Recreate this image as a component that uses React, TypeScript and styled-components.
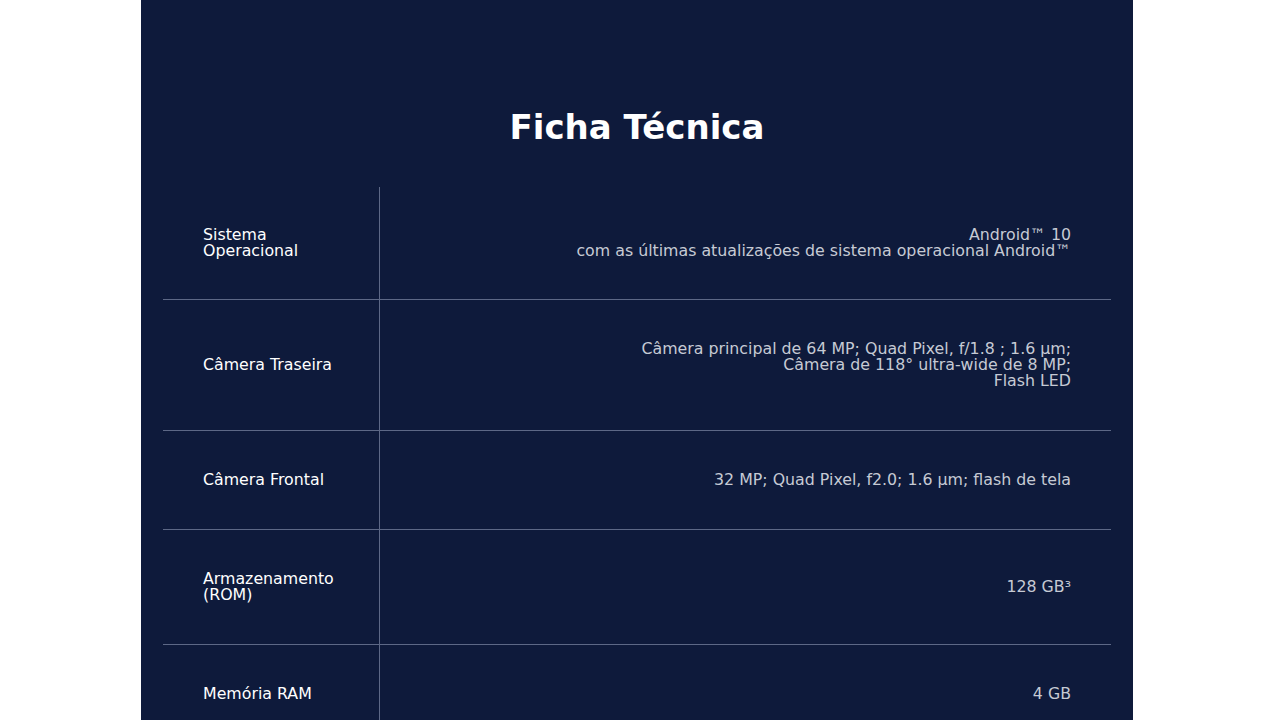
import React from 'react'
import styled, { createGlobalStyle } from 'styled-components'

const GlobalStyle = createGlobalStyle`
  html, body {
    margin: 0;
    padding: 0;
    background: #ffffff;
  }
  body {
    font-family: 'DejaVu Sans', 'Open Sans', sans-serif;
  }
`

const specs = [
  { label: ['Sistema', 'Operacional'], value: ['Android™ 10', 'com as últimas atualizações de sistema operacional Android™'] },
  {
    label: ['Câmera Traseira'],
    value: ['Câmera principal de 64 MP; Quad Pixel, f/1.8 ; 1.6 µm;', 'Câmera de 118° ultra-wide de 8 MP;', 'Flash LED'],
  },
  { label: ['Câmera Frontal'], value: ['32 MP; Quad Pixel, f2.0; 1.6 µm; flash de tela'] },
  { label: ['Armazenamento', '(ROM)'], value: ['128 GB³'] },
  { label: ['Memória RAM'], value: ['4 GB'] },
]

const App = () => (
  <>
    <GlobalStyle />
    <Page>
      <Panel>
        <Title>Ficha Técnica</Title>
        <Table>
          {specs.map((spec, i) => (
            <Row key={i} first={i === 0}>
              <Label first={i === 0}>
                {spec.label.map((line, j) => (
                  <Line key={j}>{line}</Line>
                ))}
              </Label>
              <Value first={i === 0}>
                {spec.value.map((line, j) => (
                  <Line key={j}>{line}</Line>
                ))}
              </Value>
            </Row>
          ))}
        </Table>
      </Panel>
    </Page>
  </>
)

const Page = styled.div`
  width: 1280px;
  height: 720px;
  overflow: hidden;
  display: flex;
  justify-content: center;
  padding-right: 6px;
  box-sizing: border-box;
`

const Panel = styled.section`
  width: 992px;
  background: #0e1a3b;
  padding: 0 22px;
  box-sizing: border-box;
`

const Title = styled.h1`
  margin: 0;
  padding: 104px 0 37px;
  text-align: center;
  color: #ffffff;
  font-size: 34px;
  line-height: 46px;
  font-weight: 700;
`

const Table = styled.div`
  display: flex;
  flex-direction: column;
`

const Row = styled.div<{ first?: boolean }>`
  display: grid;
  grid-template-columns: 217px 1fr;
  border-top: ${p => (p.first ? 'none' : '1px solid #5d6886')};
`

const Cell = styled.div<{ first?: boolean }>`
  display: flex;
  flex-direction: column;
  justify-content: center;
  padding-top: ${p => (p.first ? '40px' : '41px')};
  padding-bottom: ${p => (p.first ? '40px' : '41px')};
  font-size: 15.8px;
  line-height: 16px;
`

const Label = styled(Cell)`
  padding-left: 40px;
  padding-right: 12px;
  border-right: 1px solid #5d6886;
  color: #ffffff;
`

const Value = styled(Cell)`
  align-items: flex-end;
  padding-left: 20px;
  padding-right: 40px;
  color: #c6cad4;
  text-align: right;
`

const Line = styled.span`
  display: block;
  white-space: nowrap;
`

export default App
